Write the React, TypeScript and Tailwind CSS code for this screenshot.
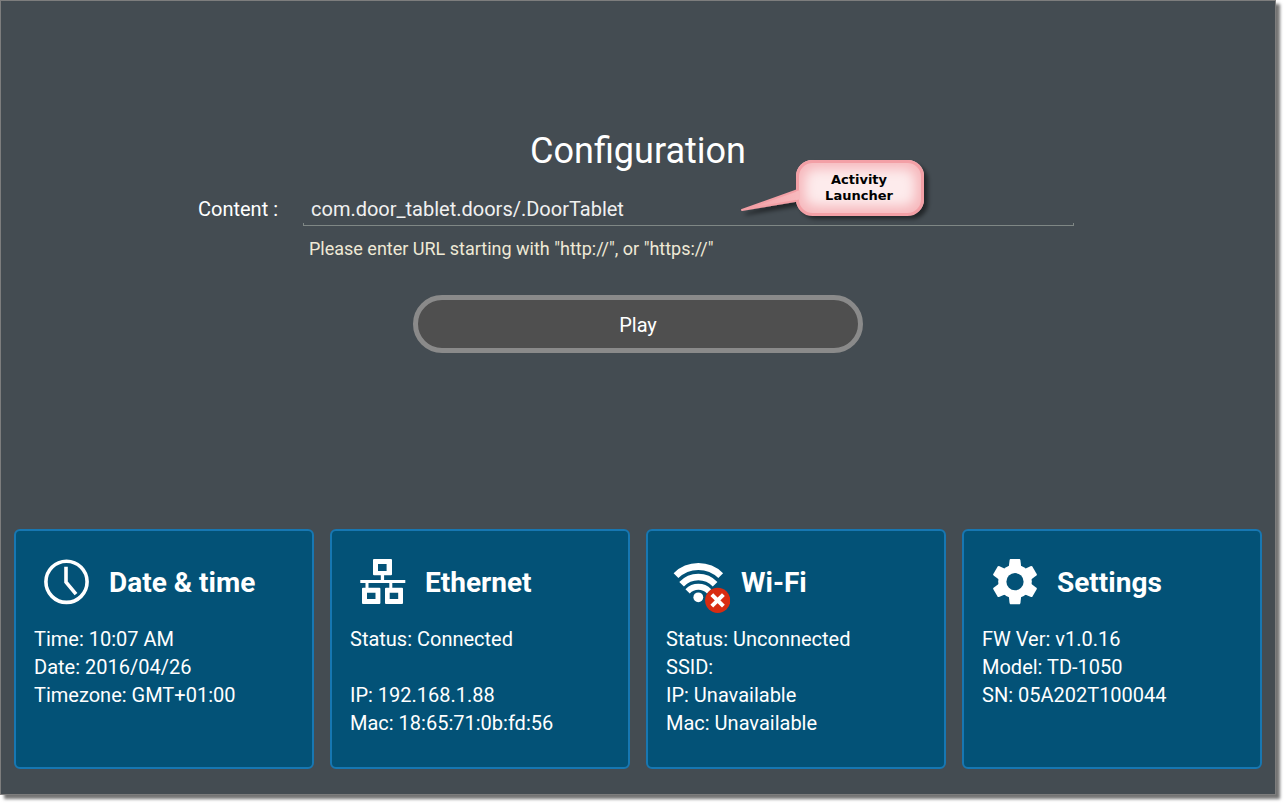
import type { ReactNode } from "react";

function ClockIcon() {
  return (
    <svg viewBox="0 0 64 64" className="size-16" fill="none" stroke="#fff" aria-hidden="true">
      <circle cx="32.5" cy="31.8" r="20.6" strokeWidth="3.6" />
      <path d="M32 16.7V32.2L42 44.2" strokeWidth="3.6" />
    </svg>
  );
}

function EthernetIcon() {
  return (
    <svg viewBox="0 0 64 64" className="size-16" fill="#fff" aria-hidden="true">
      <path
        fillRule="evenodd"
        d="M24 9h17a1 1 0 0 1 1 1v14.3a1 1 0 0 1-1 1H24a1 1 0 0 1-1-1V10a1 1 0 0 1 1-1zM28 14v7h8.6v-7zM13 37.7h16.4a1 1 0 0 1 1 1V53a1 1 0 0 1-1 1H13a1 1 0 0 1-1-1V38.7a1 1 0 0 1 1-1zM17 42.7v6.4h8.5v-6.4zM36 37.7h16a1 1 0 0 1 1 1V53a1 1 0 0 1-1 1H36a1 1 0 0 1-1-1V38.7a1 1 0 0 1 1-1zM39.7 42.7v6.4h8.5v-6.4z"
      />
      <path d="M10.3 30h45v3h-45zM30.8 25h3.3v5.5h-3.3zM15.5 32.5h3v5.5h-3zM39.3 32.5h3v5.5h-3z" />
    </svg>
  );
}

function WifiIcon() {
  return (
    <svg viewBox="0 0 64 64" className="size-16" fill="none" stroke="#fff" aria-hidden="true">
      <path d="M10 25.6A32 32 0 0 1 54.7 25.6" strokeWidth="6.8" />
      <path d="M15.6 34.2A23 23 0 0 1 49.1 34.2" strokeWidth="6.4" />
      <path d="M21.6 41.4A15 15 0 0 1 43.1 41.4" strokeWidth="6" />
      <circle cx="32.3" cy="47.3" r="4.9" fill="#fff" stroke="none" />
      <circle cx="51.7" cy="50.4" r="12.6" fill="#d82c12" stroke="none" />
      <path d="M45.8 44.6L57.4 56.2M57.4 44.6L45.8 56.2" strokeWidth="4" />
    </svg>
  );
}

function GearIcon() {
  return (
    <svg viewBox="0 0 64 64" className="size-16" aria-hidden="true">
      <g fill="#fff">
        <circle cx="33" cy="31.6" r="16.8" />
        {[0, 60, 120].map((angle) => (
          <path
            key={angle}
            d="M28.2 9h9.6l.6 1 .8 7v29.2l-.8 7-.6 1h-9.6l-.6-1-.8-7V17l.8-7z"
            transform={`rotate(${angle} 33 31.6)`}
          />
        ))}
      </g>
      <circle cx="33" cy="31.7" r="8.6" fill="#035277" />
    </svg>
  );
}

function Callout() {
  return (
    <div className="pointer-events-none absolute -top-[38px] left-[434px] h-[68px] w-[200px]">
      <svg viewBox="0 0 200 68" className="absolute inset-0 h-full w-full overflow-visible" aria-hidden="true">
        <defs>
          <linearGradient id="tail" x1="0" x2="1">
            <stop offset="0" stopColor="#f3a0a6" />
            <stop offset="1" stopColor="#f7b9bd" />
          </linearGradient>
          <filter id="shade" x="-10%" y="-20%" width="130%" height="160%">
            <feDropShadow dx="4" dy="4" stdDeviation="2" floodColor="#000" floodOpacity="0.5" />
          </filter>
          <filter id="glow" x="-10%" y="-20%" width="120%" height="140%">
            <feGaussianBlur stdDeviation="6" />
          </filter>
          <clipPath id="bubble">
            <rect x="60" y="4" width="126" height="53" rx="15" />
          </clipPath>
        </defs>
        <g filter="url(#shade)">
          <rect x="59" y="3" width="128" height="55" rx="16" fill="#f6b9bd" />
          <path d="M61 33L5 53L61 43.5z" fill="url(#tail)" stroke="#f3a0a6" strokeWidth="2" strokeLinejoin="round" />
        </g>
        <g clipPath="url(#bubble)">
          <rect x="68" y="12" width="110" height="37" rx="10" fill="#fdebec" filter="url(#glow)" />
        </g>
        <rect x="60.5" y="4.5" width="125" height="53" rx="15" fill="none" stroke="#f3a0a6" strokeWidth="3" />
        <path d="M59 34.4L63 33V42.6L59 43z" fill="#f7b9bd" />
      </svg>
      <p className="relative ml-[58px] w-32 pt-[15px] text-center font-['DejaVu_Sans',sans-serif] text-[13px] leading-4 font-bold text-black">
        Activity
        <br />
        Launcher
      </p>
    </div>
  );
}

function Card({ icon, title, lines }: { icon: ReactNode; title: string; lines: string[] }) {
  return (
    <section className="h-60 min-w-0 rounded-md border-2 border-[#1777b2] bg-[#035277] px-[18px] pt-[19px]">
      <div className="flex items-center gap-[11px]">
        {icon}
        <h2 className="pt-0.5 text-[28px] leading-8 font-bold">{title}</h2>
      </div>
      <div className="mt-[11px] text-xl leading-7">
        {lines.map((line, i) => (
          <p key={i} className="min-h-7">
            {line}
          </p>
        ))}
      </div>
    </section>
  );
}

export default function App() {
  return (
    <div className="flex min-h-screen bg-white pr-[10px] pb-[10px] font-[Roboto,sans-serif] text-white">
      <main className="flex flex-1 flex-col border border-[#7d7d7d] bg-[#444c52] px-[13px] pb-[25px] shadow-[4px_4px_3px_#0000008c]">
        <form className="flex flex-col items-center pt-32" onSubmit={(e) => e.preventDefault()}>
          <h1 className="text-4xl leading-[44px]">Configuration</h1>
          <div className="mt-[22px] flex w-[880px] max-w-full items-start pr-1">
            <label htmlFor="content" className="w-[105px] shrink-0 text-xl leading-7">
              Content :
            </label>
            <div className="relative flex-1">
              <input
                id="content"
                type="text"
                defaultValue="com.door_tablet.doors/.DoorTablet"
                className="block h-7 w-full bg-transparent px-2 text-xl text-[#f0f0f0] outline-none"
              />
              <div className="h-[3px] border-x border-b border-[#7f8785]" />
              <p className="mt-[11px] pl-[6px] text-lg leading-6 text-[#efe9d6]">
                Please enter URL starting with "http://", or "https://"
              </p>
              <Callout />
            </div>
          </div>
          <button
            type="submit"
            className="mt-[34px] h-[58px] w-[450px] max-w-full rounded-full border-5 border-[#8a8a8a] bg-[#4f4f4f] pt-0.5 text-xl"
          >
            Play
          </button>
        </form>
        <div className="mt-auto grid grid-cols-4 gap-4">
          <Card
            icon={<ClockIcon />}
            title="Date & time"
            lines={["Time: 10:07 AM", "Date: 2016/04/26", "Timezone: GMT+01:00"]}
          />
          <Card
            icon={<EthernetIcon />}
            title="Ethernet"
            lines={["Status: Connected", "", "IP: 192.168.1.88", "Mac: 18:65:71:0b:fd:56"]}
          />
          <Card
            icon={<WifiIcon />}
            title="Wi-Fi"
            lines={["Status: Unconnected", "SSID:", "IP: Unavailable", "Mac: Unavailable"]}
          />
          <Card
            icon={<GearIcon />}
            title="Settings"
            lines={["FW Ver: v1.0.16", "Model: TD-1050", "SN: 05A202T100044"]}
          />
        </div>
      </main>
    </div>
  );
}
